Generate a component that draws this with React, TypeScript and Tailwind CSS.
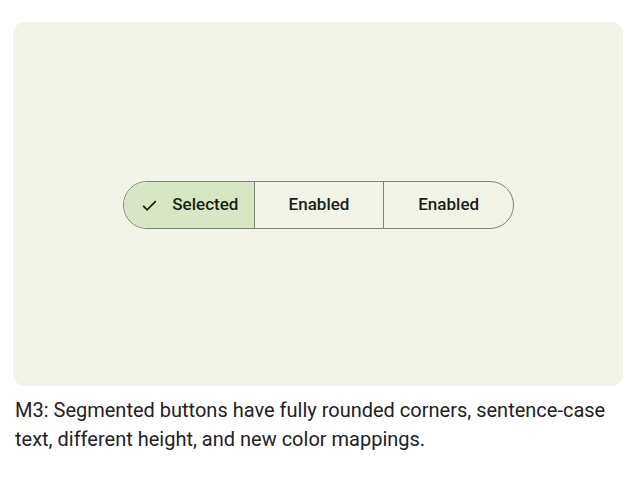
import React from "react";

export default function App() {
  return (
    <div className="w-[636px] h-[477px] bg-white pt-[22px] px-[13px]" style={{ fontFamily: "Roboto, 'Noto Sans', sans-serif" }}>
      <div className="w-[610px] h-[364px] rounded-[12px] bg-[#f2f4e8] flex items-center justify-center">
        <div className="flex h-[48px] w-[391px] mt-[2px] ml-[1px] rounded-full border-[1.5px] border-[#828278] overflow-hidden text-[17px] font-medium text-[#1c1d18]">
          <div className="flex-1 flex items-center justify-center gap-[13px] bg-[#d7e7c3] border-r-[1.5px] border-[#828278] pl-[1px]">
            <svg width="19" height="19" viewBox="0 0 24 24" fill="none" stroke="#1c1d18" strokeWidth="2.2">
              <path d="M4 12.5l5 5L20 6.5" />
            </svg>
            <span>Selected</span>
          </div>
          <div className="flex-1 flex items-center justify-center border-r-[1.5px] border-[#828278]">Enabled</div>
          <div className="flex-1 flex items-center justify-center">Enabled</div>
        </div>
      </div>
      <p className="mt-[10px] ml-[2px] text-[20px] leading-[29px] text-[#222222]">
        M3: Segmented buttons have fully rounded corners, sentence-case text, different height, and new color mappings.
      </p>
    </div>
  );
}
